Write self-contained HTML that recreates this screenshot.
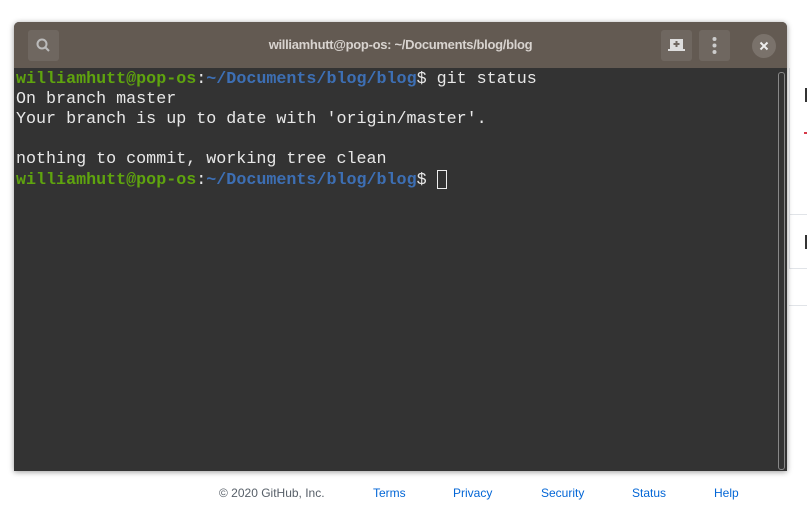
<!DOCTYPE html>
<html><head><style>
body{margin:0;width:807px;height:507px;background:#fff;position:relative;overflow:hidden;font-family:"Liberation Sans",sans-serif}
.win{position:absolute;left:14px;top:22px;width:773px;height:449px;background:#333;border-radius:5px 5px 0 0;box-shadow:0 1px 6px rgba(0,0,0,.4);overflow:hidden}
.tb{height:46px;background:#635a52;position:relative}
.title{position:absolute;left:0;right:0;top:15px;text-align:center;color:#d8d3cf;font-size:13px;font-weight:bold;letter-spacing:-.3px}
.btn{position:absolute;top:8px;width:31px;height:31px;background:#6f6760;border-radius:3px}
.term{position:absolute;left:2px;top:48px;font-family:"Liberation Mono",monospace;font-size:16.7px;line-height:20px;color:#e8e8e8;white-space:pre}
.g{color:#5fa40e;font-weight:bold}.b{color:#3d6fb4;font-weight:bold}
.sb{position:absolute;right:2px;top:50px;width:5px;height:396px;border:1px solid #888;border-radius:3px}
.foot{position:absolute;top:486px;font-size:12px;color:#0366d6}
.side{position:absolute;left:789px;top:68px;width:18px;height:200px;border-left:1px solid #e1e4e8}
</style></head><body>
<div class="side"></div>
<div style="position:absolute;left:789px;top:214px;width:18px;border-top:1px solid #e1e4e8"></div>
<div style="position:absolute;left:789px;top:268px;width:18px;border-top:1px solid #e1e4e8"></div>
<div style="position:absolute;left:789px;top:305px;width:18px;border-top:1px solid #e1e4e8"></div>
<div style="position:absolute;left:805px;top:88px;width:2px;height:14px;background:#333"></div>
<div style="position:absolute;left:805px;top:235px;width:2px;height:14px;background:#333"></div>
<div style="position:absolute;left:804px;top:132px;width:3px;height:2px;background:#d73a49"></div>
<div class="win">
<div class="tb">
<div class="btn" style="left:14px"><svg width="31" height="31"><circle cx="14" cy="14" r="4.5" fill="none" stroke="#bbb" stroke-width="2"/><path d="M17 17l4 4" stroke="#bbb" stroke-width="2"/></svg></div>
<div class="title">williamhutt@pop-os: ~/Documents/blog/blog</div>
<div class="btn" style="left:647px"><svg width="31" height="31"><rect x="9" y="9" width="13" height="10" fill="#ddd"/><rect x="7" y="19" width="17" height="2" fill="#ddd"/><path d="M15.5 11v6M12.5 14h6" stroke="#6f6760" stroke-width="2"/></svg></div>
<div class="btn" style="left:685px"><svg width="31" height="31"><circle cx="15.5" cy="9" r="2" fill="#ccc"/><circle cx="15.5" cy="15.5" r="2" fill="#ccc"/><circle cx="15.5" cy="22" r="2" fill="#ccc"/></svg></div>
<div style="position:absolute;left:738px;top:12px;width:24px;height:24px;border-radius:50%;background:#7a726b"><svg width="24" height="24"><path d="M8.5 8.5l7 7M15.5 8.5l-7 7" stroke="#eee" stroke-width="2"/></svg></div>
</div>
<div class="term"><span class="g">williamhutt@pop-os</span>:<span class="b">~/Documents/blog/blog</span>$ git status
On branch master
Your branch is up to date with 'origin/master'.

nothing to commit, working tree clean
<span class="g">williamhutt@pop-os</span>:<span class="b">~/Documents/blog/blog</span>$ <span style="display:inline-block;width:10px;height:19px;border:1px solid #eee;vertical-align:-5px;box-sizing:border-box"></span></div>
<div class="sb"></div>
</div>
<div class="foot" style="left:219px;color:#586069">© 2020 GitHub, Inc.</div>
<div class="foot" style="left:373px">Terms</div>
<div class="foot" style="left:453px">Privacy</div>
<div class="foot" style="left:541px">Security</div>
<div class="foot" style="left:632px">Status</div>
<div class="foot" style="left:714px">Help</div>
</body></html>
